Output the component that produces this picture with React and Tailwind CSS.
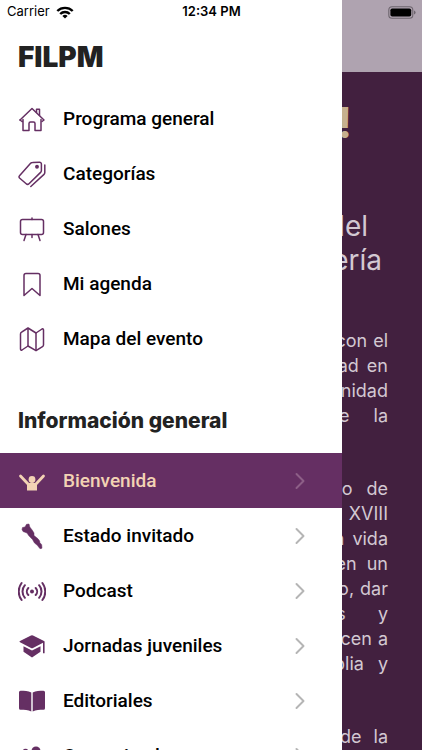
import React from 'react';
import { FiChevronRight } from 'react-icons/fi';

const HomeIcon = () => (
    <svg viewBox="0 0 28 28" className="h-7 w-7" fill="none" stroke="currentColor" strokeWidth="1.5" strokeLinejoin="round" strokeLinecap="round" aria-hidden="true">
        <path d="M2 15 14 3.500l12 11.500-2 1.500" />
        <path d="M2 15l2 1.500M5 14.500V25.500h6V18.500a1.500 1.500 0 0 1 1.500-1.500h3a1.500 1.500 0 0 1 1.500 1.500v7h6V14.500" />
        <path d="M18.500 7.500V4.200h3v6.300" />
    </svg>
);

const TagsIcon = () => (
    <svg viewBox="0 0 28 28" className="h-7 w-7" fill="none" stroke="currentColor" strokeWidth="1.5" strokeLinejoin="round" strokeLinecap="round" aria-hidden="true">
        <path d="M14.500 2.500 21.500 2.200a1.800 1.800 0 0 1 1.900 1.800v6.500a2.800 2.800 0 0 1-.8 1.900L11 23.700a2 2 0 0 1-2.800 0L1.500 18a1.600 1.600 0 0 1 0-2.300L12.600 3.300a2.600 2.600 0 0 1 1.900-.8Z" />
        <path d="M26.800 5v7.500a2.500 2.500 0 0 1-.8 1.900L12.800 26.500" />
        <circle cx="19" cy="6.800" r="1.200" fill="currentColor" />
    </svg>
);

const BoardIcon = () => (
    <svg viewBox="0 0 28 28" className="h-7 w-7" fill="none" stroke="currentColor" strokeWidth="1.5" strokeLinejoin="round" strokeLinecap="round" aria-hidden="true">
        <rect x="2.500" y="4.500" width="23" height="15" rx="2" />
        <path d="M14 3V4.500M8 19.500l-2 6M20 19.500l2 6M14 19.500v3" />
    </svg>
);

const BookmarkIcon = () => (
    <svg viewBox="0 0 28 28" className="h-7 w-7" fill="none" stroke="currentColor" strokeWidth="1.5" strokeLinejoin="round" aria-hidden="true">
        <path d="M6 25.500V5.500a2 2 0 0 1 2-2h12a2 2 0 0 1 2 2v20l-8-7Z" />
    </svg>
);

const MapIcon = () => (
    <svg viewBox="0 0 28 28" className="h-7 w-7" fill="none" stroke="currentColor" strokeWidth="1.5" strokeLinejoin="round" aria-hidden="true">
        <path d="M2.500 9a2 2 0 0 1 1.100-1.800L10 3l8 5 6-4a1 1 0 0 1 1.500.9V20a2 2 0 0 1-1 1.700L18 25.700 10 21l-6 4a1 1 0 0 1-1.500-.9Z" />
        <path d="M10 3V21M18 8v17.700" />
    </svg>
);

const WelcomeIcon = () => (
    <svg viewBox="0 0 28 28" className="h-7 w-7" aria-hidden="true">
        <circle cx="14" cy="12.500" r="3.400" fill="currentColor" />
        <path d="M2.500 9 10.500 17.500h7L25.500 9" fill="none" stroke="currentColor" strokeWidth="2.800" strokeLinecap="round" strokeLinejoin="round" />
        <path d="M9 17h10V23.500H9Z" fill="currentColor" />
    </svg>
);

const StateIcon = () => (
    <svg viewBox="0 0 28 28" className="h-7 w-7" fill="currentColor" stroke="currentColor" strokeWidth=".5" strokeLinejoin="round" aria-hidden="true">
        <path d="M4 7.500 4.500 5.500 7 5 8.500 2.300 11 2l.8 3 2.500 3.200L16 11v2.500l4 3.300 1.700 2.200.1 1.500 1.900 2.200.3 3.500-2 .5-2.700-3.400-2.800-2.300-2-3.500-3.700-3.800L9 11 5 9.500Z" />
    </svg>
);

const PodcastIcon = () => (
    <svg viewBox="0 0 28 28" className="h-7 w-7" fill="none" stroke="currentColor" strokeWidth="2" strokeLinecap="round" aria-hidden="true">
        <circle cx="14" cy="14.500" r="2" fill="currentColor" stroke="none" />
        <path d="M10.300 11a5 5 0 0 0 0 7M17.700 11a5 5 0 0 1 0 7M6.900 8.200a9.500 9.500 0 0 0 0 12.600M21.100 8.200a9.500 9.500 0 0 1 0 12.600M3.600 6a14 14 0 0 0 0 17M24.400 6a14 14 0 0 1 0 17" />
    </svg>
);

const GraduationIcon = () => (
    <svg viewBox="0 0 28 28" className="h-7 w-7" fill="currentColor" aria-hidden="true">
        <path d="M13 3.500a2.500 2.500 0 0 1 2 0l11 5.500q1.200.6 0 1.300L15 16a2.500 2.500 0 0 1-2 0L2 10.300Q.8 9.600 2 9Z" />
        <path d="M5.500 14.300 14 18.600l8.500-4.300v5.500L14 25.500l-8.500-5.700Z" />
        <path d="M25.800 9.800v11.500" stroke="currentColor" strokeWidth="1.600" />
    </svg>
);

const BookIcon = () => (
    <svg viewBox="0 0 28 28" className="h-7 w-7" fill="currentColor" aria-hidden="true">
        <path d="M1 5.300Q1 3.800 2.500 3.800c4 0 7.500.2 10.800 1.700v19C10 23 6.500 22.800 2.500 22.800Q1 22.800 1 21.300Z" />
        <path d="M27 5.300q0-1.500-1.500-1.500c-4 0-7.500.2-10.800 1.700v19c3.300-1.500 6.800-1.700 10.800-1.700q1.500 0 1.500-1.500Z" />
    </svg>
);

const PeopleIcon = () => (
    <svg viewBox="0 0 28 28" className="h-7 w-7" fill="currentColor" aria-hidden="true">
        <circle cx="18" cy="9" r="4.500" />
        <circle cx="7.500" cy="9.500" r="2.800" />
        <path d="M9 24v-4a9 9 0 0 1 18 0v4Z" />
    </svg>
);

const mainLinks = [
    { label: 'Programa general', icon: HomeIcon },
    { label: 'Categorías', icon: TagsIcon },
    { label: 'Salones', icon: BoardIcon },
    { label: 'Mi agenda', icon: BookmarkIcon },
    { label: 'Mapa del evento', icon: MapIcon },
];

const infoLinks = [
    { label: 'Bienvenida', icon: WelcomeIcon, active: true },
    { label: 'Estado invitado', icon: StateIcon },
    { label: 'Podcast', icon: PodcastIcon },
    { label: 'Jornadas juveniles', icon: GraduationIcon },
    { label: 'Editoriales', icon: BookIcon },
    { label: 'Comunicados', icon: PeopleIcon },
];

// each line is the list of its words plus the gap the justified text leaves between them
const paragraphs = [
    [
        { words: ['con', 'el'], gap: 'gap-1.5' },
        { words: ['ad', 'en'], gap: 'gap-2' },
        { words: ['nidad'], gap: 'gap-1.5' },
        { words: ['e', 'la'], gap: 'gap-6' },
    ],
    [
        { words: ['o', 'de'], gap: 'gap-3.5' },
        { words: ['XVIII'], gap: 'gap-1.5' },
        { words: ['a', 'vida'], gap: 'gap-2' },
        { words: ['en', 'un'], gap: 'gap-2.5' },
        { words: ['o,', 'dar'], gap: 'gap-1.5' },
        { words: ['s', 'y'], gap: 'gap-8' },
        { words: ['cen', 'a'], gap: 'gap-1.5' },
        { words: ['plia', 'y'], gap: 'gap-3.5' },
    ],
    [{ words: ['de', 'la'], gap: 'gap-3' }],
];

const StatusBar = () => (
    <div className="absolute inset-x-0 top-0 z-20 grid h-6 grid-cols-3 items-center pl-[7px] pr-1.5 font-['Inter',sans-serif] text-[13px] text-black">
        <div className="flex items-center gap-1.5">
            <span>Carrier</span>
            <svg viewBox="0 0 18 13" className="h-[13px] w-[18px]" fill="none" stroke="currentColor" strokeWidth="2.400" aria-hidden="true">
                <path d="M1.300 5a11 11 0 0 1 15.400 0M4.200 8a6.800 6.800 0 0 1 9.600 0" />
                <path d="M9 12.600 6.400 10a3.700 3.700 0 0 1 5.200 0Z" fill="currentColor" stroke="none" />
            </svg>
        </div>
        <div className="text-center font-semibold">12:34 PM</div>
        <svg viewBox="0 0 28 13" className="h-[13px] w-7 justify-self-end" aria-hidden="true">
            <rect x=".8" y=".8" width="24" height="11.400" rx="3.300" fill="none" stroke="#6d656e" strokeWidth="1.100" />
            <rect x="2.400" y="2.400" width="20.800" height="8.200" rx="1.800" fill="#000" />
            <path d="M26 4.500q1.600.6 1.600 2t-1.600 2Z" fill="#6d656e" />
        </svg>
    </div>
);

const MenuRow = ({ icon: Icon, label, active, arrow }) => (
    <li>
        <a
            href="#"
            aria-current={active ? 'page' : undefined}
            className={`flex h-[55px] items-center pl-[18px] pr-7 ${active ? 'bg-[#652f63] text-[#f3d3b4]' : 'text-[#652f63]'}`}
        >
            <Icon />
            <span className={`ml-[17px] flex-1 whitespace-nowrap pt-0.5 text-[19px] font-medium ${active ? 'text-[#f3d3b4]' : 'text-black'}`}>{label}</span>
            {arrow && <FiChevronRight strokeWidth={1.7} className={`h-7 w-7 ${active ? 'text-[#8d5f87]' : 'text-[#b5b5b5]'}`} />}
        </a>
    </li>
);

const WelcomePage = () => (
    <div className="min-h-screen bg-[#42203f] text-right font-['Inter',sans-serif] text-[#d3c8d2]">
        <div className="h-[72px] bg-[#afa3b0]" />
        <main className="flex flex-col items-end pr-[34px]">
            <h1 className="mt-6 pr-9 text-[43px] font-bold leading-[52px] text-[#c6b08e]">!</h1>
            <h2 className="mt-[61px] text-[28px] leading-[34px]">
                <span className="block pr-5">del</span>
                <span className="block pr-1.5">ería</span>
            </h2>
            <div className="mt-[51px] flex flex-col gap-12 text-lg leading-[25px]">
                {paragraphs.map((lines, i) => (
                    <div key={i}>
                        {lines.map((line, j) => (
                            <p key={j} className={`flex justify-end ${line.gap}`}>
                                {line.words.map((word) => (
                                    <span key={word}>{word}</span>
                                ))}
                            </p>
                        ))}
                    </div>
                ))}
            </div>
        </main>
    </div>
);

const App = () => {
    return (
        <div className="relative h-screen overflow-hidden">
            <StatusBar />
            <WelcomePage />
            {/* Side menu over the page */}
            <nav className="absolute inset-y-0 left-0 z-10 w-[81%] overflow-hidden bg-white font-['Roboto',sans-serif]">
                <h2 className="mt-10 pl-[18px] font-['Inter',sans-serif] text-[28px] font-black leading-[34px] text-[#222222]">FILPM</h2>
                <ul className="mt-[17px]">
                    {mainLinks.map((link) => (
                        <MenuRow key={link.label} {...link} />
                    ))}
                </ul>
                <h2 className="mt-[41px] pl-[18px] font-['Inter',sans-serif] text-[21px] font-extrabold leading-7 text-[#222222]">Información general</h2>
                <ul className="mt-[18px]">
                    {infoLinks.map((link) => (
                        <MenuRow key={link.label} {...link} arrow />
                    ))}
                </ul>
            </nav>
        </div>
    );
};

export default App;
